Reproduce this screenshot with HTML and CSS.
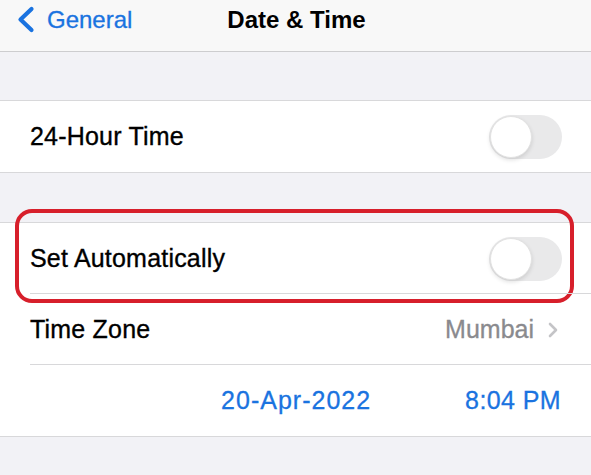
FILE: index.html
```html
<!DOCTYPE html>
<html>
<head>
<meta charset="utf-8">
<link rel="stylesheet" href="styles.css">
</head>
<body>
<div class="nav">
  <div class="back">
    <svg class="back-icon" width="20" height="28" viewBox="0 0 20 28"><path d="M15.5 3 L4.5 13.5 L15.5 24" fill="none" stroke="#1a73e0" stroke-width="4.2" stroke-linecap="round" stroke-linejoin="round"/></svg>
    <span>General</span>
  </div>
  <div class="title">Date &amp; Time</div>
</div>
<div class="gap gap-top"></div>
<div class="section">
  <div class="row">
    <span class="label">24-Hour Time</span>
    <span class="toggle"><span class="knob"></span></span>
  </div>
</div>
<div class="gap gap-mid"></div>
<div class="section">
  <div class="row row-inset highlight">
    <span class="label">Set Automatically</span>
    <span class="toggle"><span class="knob"></span></span>
    <div class="redbox"></div>
  </div>
  <div class="row row-inset">
    <span class="label">Time Zone</span>
    <span class="value">Mumbai
      <svg class="chev" width="10" height="16" viewBox="0 0 10 16"><path d="M2 2 L8 8 L2 14" fill="none" stroke="#c4c4c7" stroke-width="2.6" stroke-linecap="round" stroke-linejoin="round"/></svg>
    </span>
  </div>
  <div class="row row-last date-row">
    <span class="blue date">20-Apr-2022</span>
    <span class="blue time">8:04 PM</span>
  </div>
</div>
<div class="gap"></div>
</body>
</html>
```

FILE: styles.css
```css
html, body {
  margin: 0;
  padding: 0;
}
body {
  width: 591px;
  height: 475px;
  overflow: hidden;
  background: #f2f2f6;
  font-family: "Liberation Sans", Arial, sans-serif;
  color: #000;
}
.nav {
  height: 51px;
  background: #f8f8f8;
  border-bottom: 1px solid #cdcdcf;
  position: relative;
  display: flex;
  align-items: flex-start;
}
.back {
  display: flex;
  align-items: center;
  padding-left: 16px;
  padding-top: 6px;
  color: #1a73e0;
  font-size: 24px;
  gap: 11px;
  -webkit-text-stroke: 0.3px #1a73e0;
}
.back-icon {
  display: block;
}
.title {
  position: absolute;
  left: 0;
  right: 0;
  top: 7px;
  text-align: center;
  font-weight: bold;
  font-size: 24px;
  padding-left: 2px;
  line-height: 26px;
}
.back span {
  line-height: 26px;
}
.gap {
  height: 48px;
}
.gap-top {
  height: 48px;
}
.gap-mid {
  height: 49px;
}
.section {
  background: #fff;
  border-top: 1px solid #d8d8da;
  border-bottom: 1px solid #d8d8da;
}
.row {
  height: 71px;
  display: flex;
  align-items: center;
  justify-content: space-between;
  padding: 0 29px 0 30px;
  position: relative;
  box-sizing: border-box;
}
.row-inset {
  height: 71px;
}
.row-inset::after {
  content: "";
  position: absolute;
  left: 30px;
  right: 0;
  bottom: 0;
  height: 1px;
  background: #d8d8da;
}
.row-last {
  height: 71px;
}
.label {
  font-size: 25px;
  letter-spacing: 0.2px;
  -webkit-text-stroke: 0.35px #000;
}
.toggle {
  width: 73px;
  height: 44px;
  border-radius: 22px;
  background: #e9e9ea;
  position: relative;
  display: block;
}
.knob {
  position: absolute;
  left: 1px;
  top: 1px;
  width: 40px;
  height: 40px;
  border-radius: 50%;
  background: #fff;
  border: 1px solid #e2e2e2;
  box-shadow: 0 2px 4px rgba(0,0,0,0.12);
}
.value {
  font-size: 25px;
  color: #8a8a8e;
  display: flex;
  align-items: center;
  gap: 14px;
  padding-right: 4px;
  -webkit-text-stroke: 0.3px #8a8a8e;
}
.chev {
  display: block;
}
.date-row {
  justify-content: flex-end;
  gap: 94px;
  padding-right: 30px;
}
.blue {
  color: #1a73e0;
  font-size: 25px;
  -webkit-text-stroke: 0.3px #1a73e0;
}
.date {
  letter-spacing: 1px;
}
.time {
  letter-spacing: 0.4px;
}
.redbox {
  position: absolute;
  left: 15px;
  top: -14px;
  width: 551px;
  height: 86px;
  border: 4px solid #d71f2b;
  border-radius: 17px;
  pointer-events: none;
}
```
